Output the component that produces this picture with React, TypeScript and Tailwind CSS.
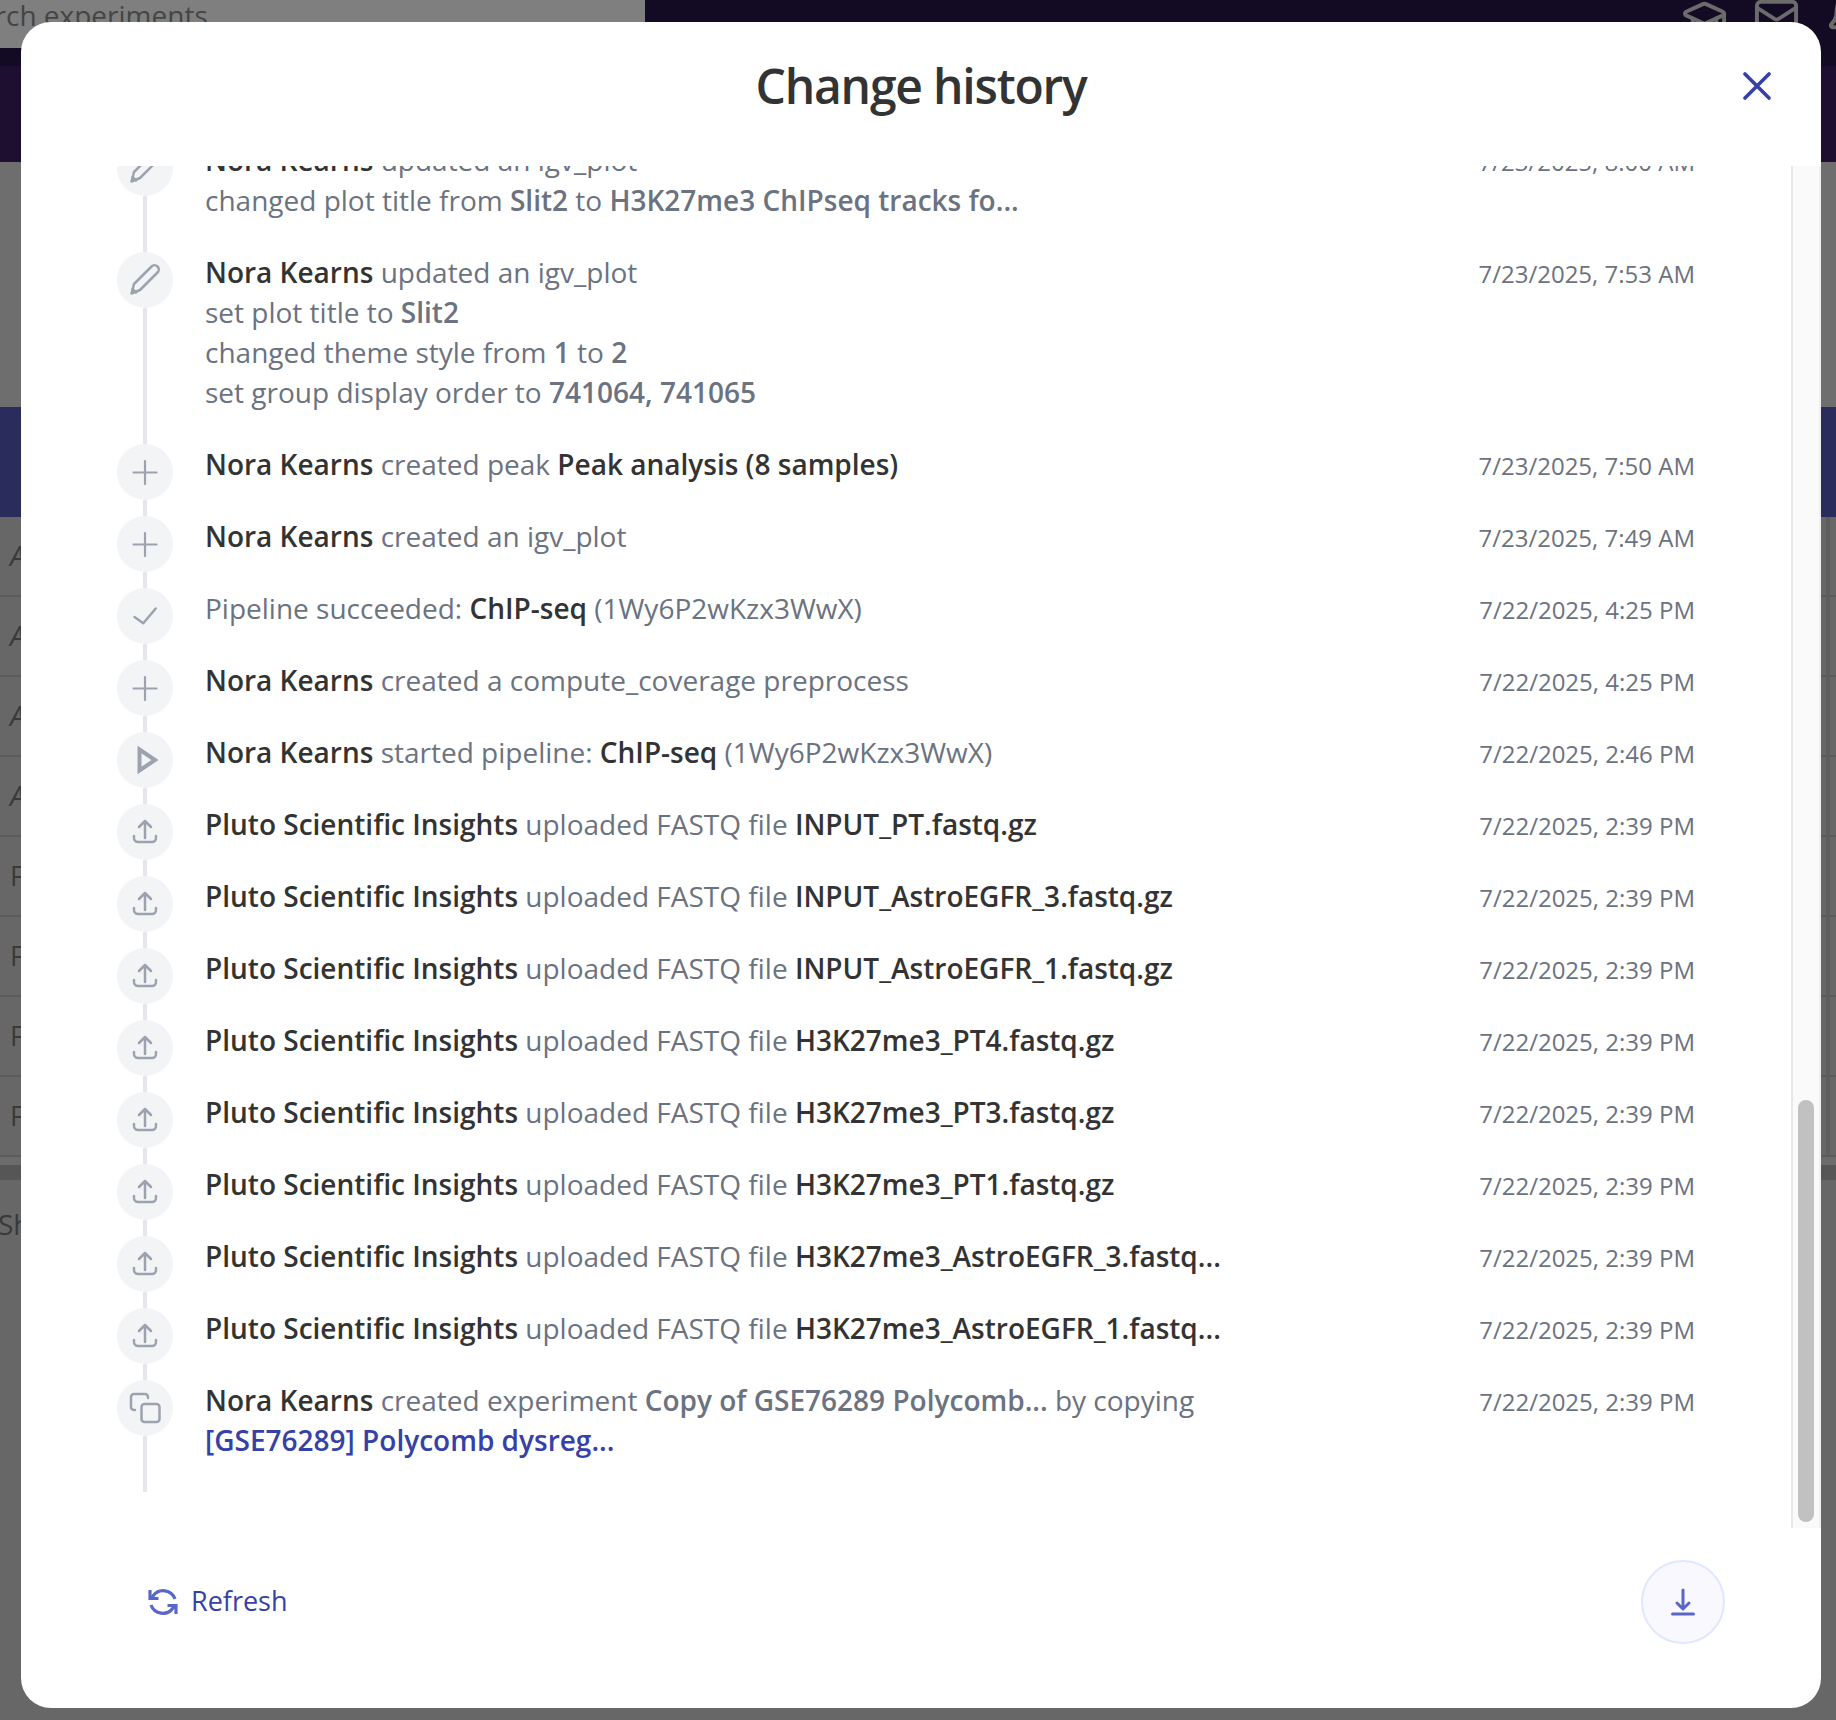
import { ReactNode } from "react";
import { Bell, GraduationCap, Mail } from "lucide-react";

type IconKind = "pencil" | "plus" | "check" | "play" | "upload" | "copy";

function RowIcon({ kind }: { kind: IconKind }) {
  return (
    <svg
      viewBox="0 0 56 56"
      fill="none"
      stroke="#9ca3af"
      strokeWidth={2.5}
      strokeLinecap="round"
      strokeLinejoin="round"
      className="w-14 h-14"
    >
      {kind === "pencil" && (
        <>
          <path d="M14.5 41.5 L17 32 L34.5 14.5 A4.2 4.2 0 0 1 40.5 20.5 L23 38 Z" />
          <path d="M15.5 37 L19 40.5" />
        </>
      )}
      {kind === "plus" && <path d="M28 17 V40 M16.5 28.5 H39.5" strokeWidth={2.2} />}
      {kind === "check" && <path d="M17.5 29 L26.3 35.3 L38.7 20.5" />}
      {kind === "play" && <path d="M22.5 17.5 L38 28 L22.5 38.5 Z" strokeWidth={4} strokeLinejoin="miter" />}
      {kind === "upload" && (
        <>
          <path d="M28 34 V17 M22 23 L28 17 L34 23" />
          <path d="M17 32 V34 A4 4 0 0 0 21 38 H35 A4 4 0 0 0 39 34 V32" />
        </>
      )}
      {kind === "copy" && (
        <>
          <path d="M31 18 V17 A3 3 0 0 0 28 14 H17 A3 3 0 0 0 14 17 V27 A3 3 0 0 0 17 30 H18" />
          <rect x="24.5" y="24" width="18" height="18" rx="3" />
        </>
      )}
    </svg>
  );
}

// dark name / medium gray detail helpers
const N = ({ children }: { children: ReactNode }) => (
  <span className="font-semibold text-[#333333]">{children}</span>
);
const B = ({ children }: { children: ReactNode }) => (
  <span className="font-semibold text-[#6b7280]">{children}</span>
);

interface HistoryRow {
  icon: IconKind;
  time: string;
  lines: ReactNode[];
}

const uploads = [
  "INPUT_PT.fastq.gz",
  "INPUT_AstroEGFR_3.fastq.gz",
  "INPUT_AstroEGFR_1.fastq.gz",
  "H3K27me3_PT4.fastq.gz",
  "H3K27me3_PT3.fastq.gz",
  "H3K27me3_PT1.fastq.gz",
  "H3K27me3_AstroEGFR_3.fastq...",
  "H3K27me3_AstroEGFR_1.fastq...",
];

const rows: HistoryRow[] = [
  {
    icon: "pencil",
    time: "7/23/2025, 8:00 AM",
    lines: [
      <><N>Nora Kearns</N> updated an igv_plot</>,
      <>changed plot title from <B>Slit2</B> to <B>H3K27me3 ChIPseq tracks fo...</B></>,
    ],
  },
  {
    icon: "pencil",
    time: "7/23/2025, 7:53 AM",
    lines: [
      <><N>Nora Kearns</N> updated an igv_plot</>,
      <>set plot title to <B>Slit2</B></>,
      <>changed theme style from <B>1</B> to <B>2</B></>,
      <>set group display order to <B>741064, 741065</B></>,
    ],
  },
  {
    icon: "plus",
    time: "7/23/2025, 7:50 AM",
    lines: [<><N>Nora Kearns</N> created peak <N>Peak analysis (8 samples)</N></>],
  },
  {
    icon: "plus",
    time: "7/23/2025, 7:49 AM",
    lines: [<><N>Nora Kearns</N> created an igv_plot</>],
  },
  {
    icon: "check",
    time: "7/22/2025, 4:25 PM",
    lines: [<>Pipeline succeeded: <N>ChIP-seq</N> (1Wy6P2wKzx3WwX)</>],
  },
  {
    icon: "plus",
    time: "7/22/2025, 4:25 PM",
    lines: [<><N>Nora Kearns</N> created a compute_coverage preprocess</>],
  },
  {
    icon: "play",
    time: "7/22/2025, 2:46 PM",
    lines: [<><N>Nora Kearns</N> started pipeline: <N>ChIP-seq</N> (1Wy6P2wKzx3WwX)</>],
  },
  ...uploads.map((file): HistoryRow => ({
    icon: "upload",
    time: "7/22/2025, 2:39 PM",
    lines: [<><N>Pluto Scientific Insights</N> uploaded FASTQ file <N>{file}</N></>],
  })),
  {
    icon: "copy",
    time: "7/22/2025, 2:39 PM",
    lines: [
      <><N>Nora Kearns</N> created experiment <B>Copy of GSE76289 Polycomb...</B> by copying</>,
      <span className="font-semibold text-[#3641a8]">[GSE76289] Polycomb dysreg...</span>,
    ],
  },
];

// the dimmed page behind the dialog
function Backdrop() {
  const letters = ["A", "A", "A", "A", "F", "F", "F", "F"];
  return (
    <div className="flex flex-col h-[1720px] bg-[#676767] text-[#3a3a3a] overflow-hidden">
      <div className="flex h-[66px] shrink-0 bg-[#130a24]">
        <div className="w-[645px] h-[48px] bg-[#7f7f7f] overflow-hidden text-[28px] leading-[40px] text-[#454545]">
          <div className="-ml-[21px] -mt-[5px]">arch experiments</div>
        </div>
        <div className="flex-1 flex justify-end text-[#6b6b6b] -mt-[6px] gap-[25px] -mr-[36px]">
          <GraduationCap size={47} strokeWidth={2} className="shrink-0" />
          <Mail size={47} strokeWidth={2} className="shrink-0" />
          <Bell size={47} strokeWidth={2} className="shrink-0" />
        </div>
      </div>
      <div className="h-[96px] shrink-0 bg-[#1e0f30]" />
      <div className="h-[245px] shrink-0 bg-[#6e6e6e]" />
      <div className="h-[110px] shrink-0 bg-[#2a2d5c]" />
      {letters.map((l, i) => (
        <div key={i} className="h-[80px] shrink-0 flex items-center border-b-2 border-[#5c5c5c] pl-[10px] text-[27px]">
          <span className={l === "A" ? "italic" : ""}>{l}</span>
          <div className="ml-auto w-[10px] h-full border-l-4 border-[#5e5e5e]" />
        </div>
      ))}
      <div className="h-[8px] shrink-0 bg-[#6c6c6c]" />
      <div className="h-[15px] shrink-0 bg-[#565656]" />
      <div className="shrink-0 pt-[24px] -ml-[2px] text-[28px] leading-[40px]">Show</div>
    </div>
  );
}

export default function App() {
  return (
    <div className="relative w-[1836px] h-[1720px] overflow-hidden font-['Open_Sans',sans-serif]">
      <Backdrop />
      <div className="absolute left-[21px] top-[22px] w-[1800px] h-[1686px] rounded-[30px] bg-white flex flex-col overflow-hidden">
        {/* Header */}
        <div className="relative h-[144px] shrink-0 flex items-start justify-center pt-[31px]">
          <h2 className="text-[48px] leading-[66px] font-semibold text-[#333333] tracking-[-1.2px]">Change history</h2>
          <svg viewBox="0 0 28 28" className="absolute right-[50px] top-[50px] w-7 h-7" fill="none" stroke="#3641a8" strokeWidth={3.6} strokeLinecap="round">
            <path d="M2 2 L26 26 M26 2 L2 26" />
          </svg>
        </div>

        {/* List + scrollbar */}
        <div className="flex h-[1362px] shrink-0">
          <div className="flex-1 overflow-hidden px-24">
            <div className="-mt-[26px]">
              {rows.map((row, i) => (
                <div key={i} className="flex gap-8">
                  <div className="w-14 shrink-0 flex flex-col items-center">
                    <div className="w-14 h-14 shrink-0 rounded-full bg-[#f3f4f6]">
                      <RowIcon kind={row.icon} />
                    </div>
                    <div className="w-1 grow bg-[#e5e7eb]" />
                  </div>
                  <div className="flex-1 flex justify-between pb-8 text-[28px] leading-[40px] text-[#6b7280]">
                    <div>
                      {row.lines.map((line, j) => (
                        <div key={j}>{line}</div>
                      ))}
                    </div>
                    <div className="text-[24px] leading-[44px] h-10 text-right whitespace-nowrap">{row.time}</div>
                  </div>
                </div>
              ))}
            </div>
          </div>
          <div className="w-[30px] shrink-0 bg-[#fafafa] border-l-2 border-r-2 border-l-[#e8e8e8] border-r-[#f0f0f0] flex flex-col justify-end pb-[6px] items-center">
            <div className="w-4 h-[422px] rounded-full bg-[#c1c1c1]" />
          </div>
        </div>

        {/* Footer */}
        <div className="flex items-center justify-between pt-8 pl-[127px] pr-24">
          <div className="flex items-center gap-[13px] text-[27px] leading-[40px] font-medium text-[#3641a8]">
            <svg viewBox="0 0 30 30" className="w-[30px] h-[30px]" fill="none" stroke="#5b67c8" strokeWidth={3.2}>
              <path d="M27 12 A12.5 12.5 0 0 0 5 9 L2.5 11" />
              <path d="M2 3 V11.5 H10.5" />
              <path d="M3 18 A12.5 12.5 0 0 0 25 21 L27.5 19" />
              <path d="M28 27 V18.5 H19.5" />
            </svg>
            <span className="pb-[3px]">Refresh</span>
          </div>
          <div className="w-[84px] h-[84px] rounded-full border-2 border-[#e0e7ff] bg-[#f8f8fe] flex items-center justify-center">
            <svg viewBox="0 0 30 30" className="w-[30px] h-[30px]" fill="none" stroke="#5b67c8" strokeWidth={3} strokeLinecap="round" strokeLinejoin="round">
              <path d="M15 3 V21 M9 16 L15 22 L21 16" />
              <path d="M4.5 27 H25.5" />
            </svg>
          </div>
        </div>
      </div>
    </div>
  );
}
